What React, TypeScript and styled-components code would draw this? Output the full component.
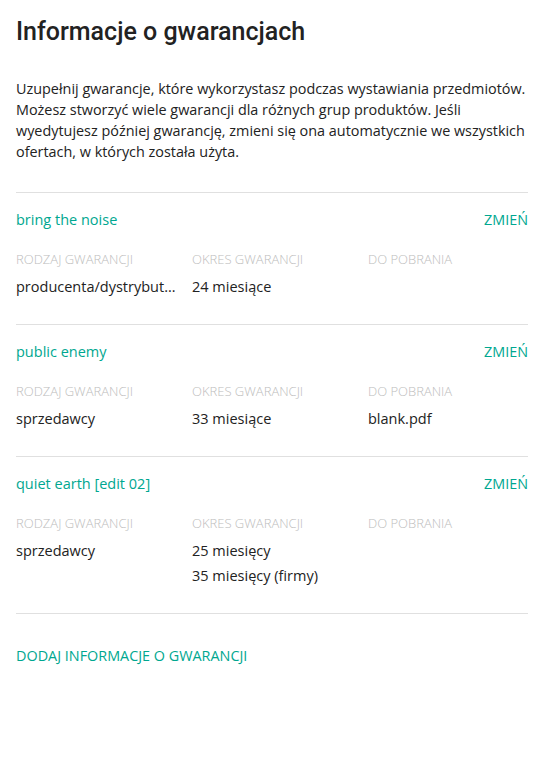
import React from "react";
import styled, { createGlobalStyle } from "styled-components";

const Global = createGlobalStyle`
  html, body { margin: 0; padding: 0; background: #fff; }
  body { font-family: "Open Sans", sans-serif; color: #222; }
`;

const Page = styled.div`
  padding: 16px;
  width: 512px;
`;

const Title = styled.h1`
  margin: 0;
  font-family: Roboto, sans-serif;
  font-weight: 500;
  font-size: 25px;
  line-height: 32px;
  color: #222;
`;

const Intro = styled.p`
  margin: 30px 0 30px;
  font-size: 14.4px;
  line-height: 21px;
  color: #222;
`;

const Section = styled.section`
  border-top: 1px solid #e0e0e0;
  padding: 17px 0 27px;
`;

const Header = styled.div`
  display: flex;
  justify-content: space-between;
  align-items: center;
  line-height: 20px;
  font-size: 14.5px;
`;

const Name = styled.span`
  color: #00a790;
`;

const Action = styled.a`
  color: #00a790;
  text-transform: uppercase;
  font-size: 14.4px;
  text-decoration: none;
  cursor: pointer;
`;

const Grid = styled.div`
  display: grid;
  grid-template-columns: 160px 160px 160px;
  column-gap: 16px;
  margin-top: 21px;
`;

const Column = styled.div`
  display: flex;
  flex-direction: column;
  min-width: 0;
`;

const Label = styled.div`
  font-size: 13px;
  font-weight: 300;
  line-height: 16px;
  color: #bdbdbd;
  text-transform: uppercase;
  margin-bottom: 10px;
`;

const Value = styled.div`
  font-size: 14.5px;
  line-height: 20px;
  color: #222;
  white-space: nowrap;
  overflow: hidden;
  text-overflow: ellipsis;
  & + & { margin-top: 5px; }
`;

const Footer = styled.div`
  border-top: 1px solid #e0e0e0;
  padding-top: 31px;
  line-height: 20px;
`;

type Warranty = {
  name: string;
  kind: string;
  periods: string[];
  files: string[];
};

const data: Warranty[] = [
  { name: "bring the noise", kind: "producenta/dystrybutora", periods: ["24 miesiące"], files: [] },
  { name: "public enemy", kind: "sprzedawcy", periods: ["33 miesiące"], files: ["blank.pdf"] },
  { name: "quiet earth [edit 02]", kind: "sprzedawcy", periods: ["25 miesięcy", "35 miesięcy (firmy)"], files: [] },
];

export default function App() {
  return (
    <>
      <Global />
      <Page>
        <Title>Informacje o gwarancjach</Title>
        <Intro>
          Uzupełnij gwarancje, które wykorzystasz podczas wystawiania przedmiotów. Możesz stworzyć wiele
          gwarancji dla różnych grup produktów. Jeśli wyedytujesz później gwarancję, zmieni się ona
          automatycznie we wszystkich ofertach, w których została użyta.
        </Intro>
        {data.map((w) => (
          <Section key={w.name}>
            <Header>
              <Name>{w.name}</Name>
              <Action>Zmień</Action>
            </Header>
            <Grid>
              <Column>
                <Label>Rodzaj gwarancji</Label>
                <Value>{w.kind}</Value>
              </Column>
              <Column>
                <Label>Okres gwarancji</Label>
                {w.periods.map((p) => (
                  <Value key={p}>{p}</Value>
                ))}
              </Column>
              <Column>
                <Label>Do pobrania</Label>
                {w.files.map((f) => (
                  <Value key={f}>{f}</Value>
                ))}
              </Column>
            </Grid>
          </Section>
        ))}
        <Footer>
          <Action>Dodaj informacje o gwarancji</Action>
        </Footer>
      </Page>
    </>
  );
}
